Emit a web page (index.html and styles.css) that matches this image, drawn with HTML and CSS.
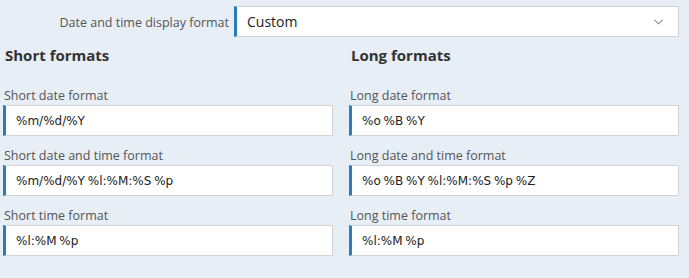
FILE: index.html
```html
<!DOCTYPE html>
<html>
<head>
<meta charset="utf-8">
<link rel="stylesheet" href="styles.css">
</head>
<body>
<div class="page">
  <div class="top-row">
    <label class="top-label">Date and time display format</label>
    <div class="select">
      <span class="select-value">Custom</span>
      <svg class="chevron" width="9" height="6" viewBox="0 0 9 6"><polyline points="0.5,0.8 4.5,4.8 8.5,0.8" fill="none" stroke="#8a8a8a" stroke-width="1.1"/></svg>
    </div>
  </div>
  <div class="columns">
    <div class="col">
      <h2 class="heading">Short formats</h2>
      <div class="field">
        <label class="label">Short date format</label>
        <div class="input">%m/%d/%Y</div>
      </div>
      <div class="field">
        <label class="label">Short date and time format</label>
        <div class="input">%m/%d/%Y %l:%M:%S %p</div>
      </div>
      <div class="field">
        <label class="label">Short time format</label>
        <div class="input">%l:%M %p</div>
      </div>
    </div>
    <div class="col">
      <h2 class="heading">Long formats</h2>
      <div class="field">
        <label class="label">Long date format</label>
        <div class="input">%o %B %Y</div>
      </div>
      <div class="field">
        <label class="label">Long date and time format</label>
        <div class="input">%o %B %Y %l:%M:%S %p %Z</div>
      </div>
      <div class="field">
        <label class="label">Long time format</label>
        <div class="input">%l:%M %p</div>
      </div>
    </div>
  </div>
</div>
</body>
</html>
```
FILE: styles.css
```css
html, body {
  margin: 0;
  padding: 0;
  background: #e8eef6;
}
body {
  font-family: "Open Sans", "Noto Sans", sans-serif;
  color: #333;
  width: 689px;
  height: 278px;
  overflow: hidden;
}
.page {
  padding: 6px 10px 0 3px;
}
.top-row {
  display: grid;
  grid-template-columns: 226px 445px;
  column-gap: 5px;
  align-items: center;
}
.top-label {
  text-align: right;
  font-size: 12.5px;
  line-height: 18px;
  color: #555;
  padding-top: 2px;
}
.select {
  height: 31px;
  box-sizing: border-box;
  background: #fff;
  border: 1px solid #d3d3d3;
  border-left: 3px solid #2a7dbb;
  display: flex;
  align-items: center;
  justify-content: space-between;
  padding: 0 15px 0 10px;
}
.select-value {
  font-size: 14px;
  color: #222;
}
.chevron {
  display: block;
}
.columns {
  display: grid;
  grid-template-columns: 330px 330px;
  column-gap: 16px;
}
.heading {
  margin: 7px 0 22px 2px;
  font-size: 15px;
  line-height: 22px;
  font-weight: 700;
  color: #333;
}
.field {
  margin-bottom: 12px;
}
.label {
  display: block;
  font-size: 12.5px;
  line-height: 16px;
  color: #555;
  padding-left: 1px;
  margin-bottom: 1px;
}
.input {
  height: 31px;
  box-sizing: border-box;
  background: #fff;
  border: 1px solid #d3d3d3;
  border-left: 3px solid #2a7dbb;
  padding: 0 10px;
  display: flex;
  align-items: center;
  font-family: "DejaVu Sans", Verdana, sans-serif;
  font-size: 12px;
  word-spacing: -1px;
  color: #222;
}
```
